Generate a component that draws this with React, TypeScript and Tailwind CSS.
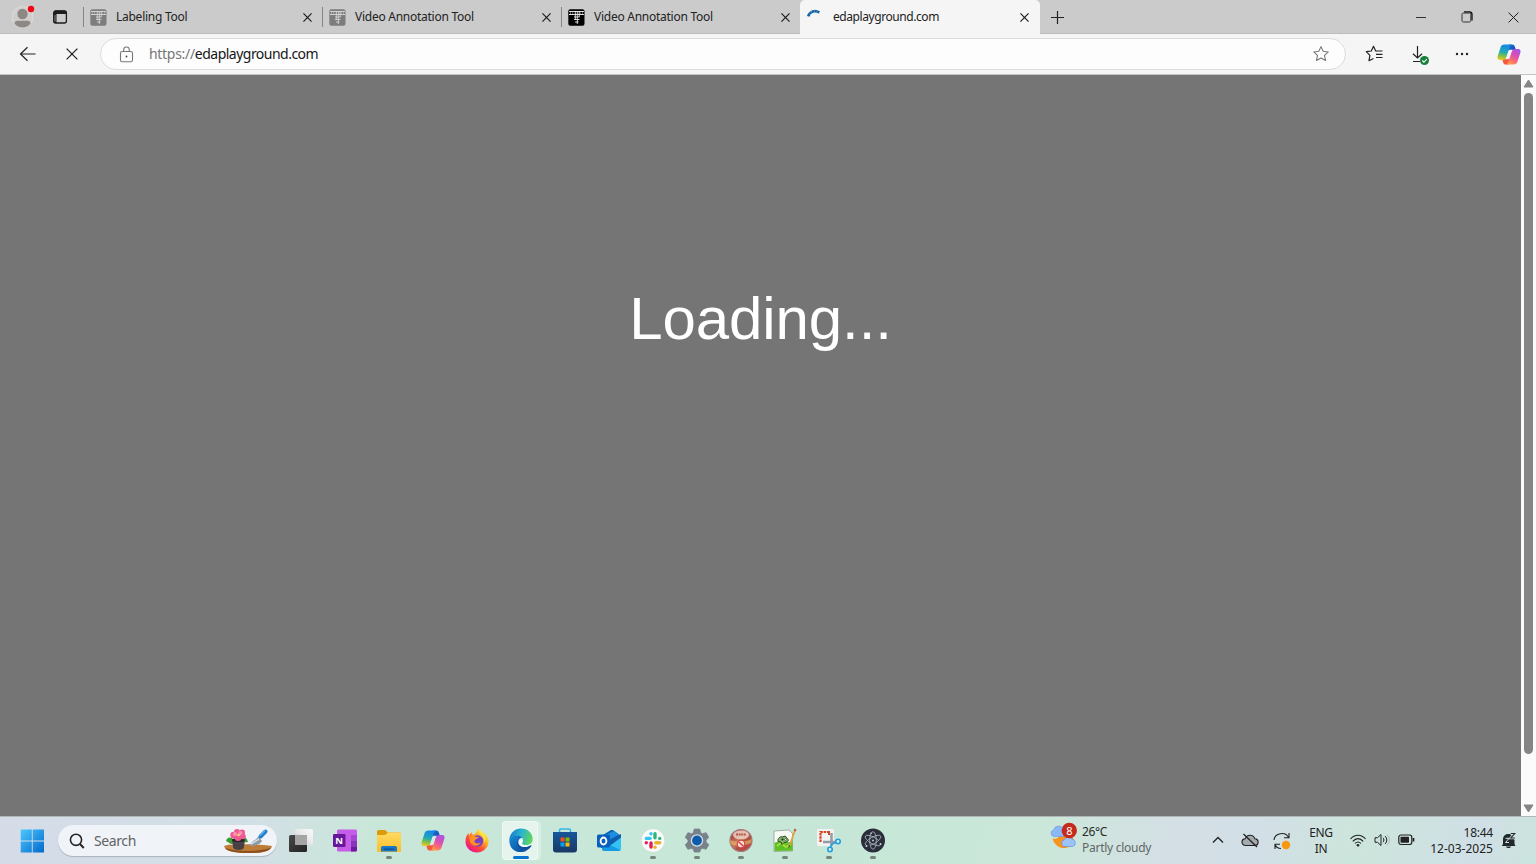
import type { ReactNode } from 'react';

const font = "font-['Noto_Sans','Open_Sans',sans-serif]";

function GridFavicon({ color, mark }: { color: string; mark: string }) {
  return (
    <svg width="17" height="17" viewBox="0 0 17 17">
      <rect x=".3" y=".3" width="16.200" height="16.400" rx="2" fill={color} />
      <g stroke={mark} fill="none">
        <path d="M1 2.500h15M1 5.500h15" strokeWidth="1.100" opacity=".85" />
        <path d="M6 8h5.500M6 10.500h5.500M7 13h3.500" strokeWidth="1" opacity=".8" />
        <path d="M2.500 2v4M4.700 2v4M12.200 2v4M14.500 2v4" strokeWidth=".8" opacity=".5" />
        <path d="M7.300 2v9M9.300 2v13M11.200 2v6" strokeWidth="1" opacity=".8" />
      </g>
    </svg>
  );
}

function CloseIcon({ size = 9, width = 1.3 }: { size?: number; width?: number }) {
  return (
    <svg width={size} height={size} viewBox="0 0 10 10" fill="none" stroke="#1b1b1b" strokeWidth={width} className="overflow-visible">
      <path d="M.5 .5l9 9M9.5 .5l-9 9" />
    </svg>
  );
}

function Tab({ title, icon }: { title: string; icon: ReactNode }) {
  return (
    <div className="flex h-[34px] w-[239px] shrink-0 items-center">
      <div className="h-5 w-px bg-[#858585]" />
      <div className="ml-[6px]">{icon}</div>
      <span className="ml-[9px] text-[12px] leading-4 tracking-[-0.26px] text-[#222]">{title}</span>
      <div className="mr-[10px] ml-auto flex pt-px"><CloseIcon /></div>
    </div>
  );
}

function Copilot({ id, hole }: { id: string; hole: string }) {
  return (
    <svg width="24" height="25" viewBox="0 0 24 24" className="shrink-0">
      <defs>
        <linearGradient id={id + 'a'} x1=".3" y1="0" x2=".1" y2="1">
          <stop offset="0" stopColor="#1689e3" /><stop offset=".45" stopColor="#21a9b8" /><stop offset=".7" stopColor="#7bc04c" /><stop offset="1" stopColor="#ffc91d" />
        </linearGradient>
        <linearGradient id={id + 'b'} x1=".9" y1="0" x2=".4" y2="1">
          <stop offset="0" stopColor="#a455ed" /><stop offset=".45" stopColor="#d94fb4" /><stop offset=".75" stopColor="#fa6a78" /><stop offset="1" stopColor="#ff9a45" />
        </linearGradient>
        <linearGradient id={id + 'c'} x1="0" y1="0" x2="1" y2="1">
          <stop offset="0" stopColor="#1d79df" /><stop offset="1" stopColor="#143ab1" />
        </linearGradient>
      </defs>
      <path d="M12 2h3.200c1.500 0 2.200.800 2.700 2.300l1 3.200H16c-2 0-2.900.6-3.600 2.700L11 6z" fill={`url(#${id}c)`} />
      <path d="M12 22H8.800c-1.500 0-2.200-.8-2.700-2.300l-1-3.200H8c2 0 2.900-.6 3.600-2.700L13 18z" fill="#f4583f" />
      <path d="M7.400 2H15.600c-1.800 0-2.500 1.300-3.100 3L9.500 14.200c-.8 2.400-1.700 3.300-3.700 3.300H3c-2.400 0-3-1.700-2.300-4L3.500 4.900C4.200 2.900 5.300 2 7.400 2z" fill={`url(#${id}a)`} />
      <path d="M16.600 22H8.400c1.800 0 2.500-1.300 3.100-3l3-9.200c.8-2.400 1.700-3.300 3.700-3.300H21c2.400 0 3 1.700 2.300 4l-2.800 8.600c-.7 2-1.800 2.900-3.900 2.900z" fill={`url(#${id}b)`} />
      <path d="M15.800 7.200h-2.400c-.9 0-1.400.4-1.700 1.300l-2 6.300c-.3 1-.7 1.600-1.500 2h2.400c.9 0 1.400-.4 1.700-1.300l2-6.300c.3-1 .7-1.600 1.500-2z" fill={hole} />
    </svg>
  );
}

const starPath = 'M10 1.800l2.400 5.200 5.700.7-4.200 3.900 1.100 5.600-5-2.800-5 2.800 1.100-5.600L1.900 7.700l5.700-.7z';

function TabStrip() {
  return (
    <header className="flex h-[34px] items-center bg-[#cbcbcb] shadow-[inset_0_-1px_0_#bdbdbd]">
      <div className="flex w-[83px] shrink-0 items-center pl-[11px]">
        <svg width="24" height="24" viewBox="0 0 24 24">
          <circle cx="11.500" cy="12" r="10.500" fill="#d1cfcc" stroke="#dedcd8" />
          <circle cx="11.500" cy="9" r="5.200" fill="#8c8884" />
          <path d="M3.500 18.500c0-2.500 2-2.800 4-2.800h8c2 0 4 .3 4 2.800-1.800 2.600-4.800 4-8 4s-6.200-1.400-8-4z" fill="#8c8884" />
          <circle cx="20" cy="4" r="3.200" fill="#ee0713" />
        </svg>
        <svg className="ml-[17px]" width="16" height="16" viewBox="0 0 16 16" fill="none">
          <rect x="1.700" y="2" width="12.700" height="12" rx="2" stroke="#1d1d1d" strokeWidth="1.300" />
          <path d="M1.500 3.500a2 2 0 012-2h9a2 2 0 012 2v1.400h-13zM1.500 4h3v10h-1a2 2 0 01-2-2z" fill="#1d1d1d" />
          <path d="M3 6v6.500" stroke="#aaa" strokeWidth=".8" />
        </svg>
      </div>
      <Tab title="Labeling Tool" icon={<GridFavicon color="#7d7d7d" mark="#dcdcdc" />} />
      <Tab title="Video Annotation Tool" icon={<GridFavicon color="#7d7d7d" mark="#dcdcdc" />} />
      <Tab title="Video Annotation Tool" icon={<GridFavicon color="#000000" mark="#ffffff" />} />
      <div className="flex h-[34px] w-[240px] shrink-0 items-center rounded-t-[5px] bg-[#f5f5f5]">
        <svg className="ml-[6px]" width="16" height="16" viewBox="0 0 16 16" fill="none">
          <path d="M2.300 7.300C3.700 2.500 8.700.8 13.300 3.500" stroke="#1064a9" strokeWidth="2.700" strokeDasharray="2.600 .2" />
        </svg>
        <span className="ml-[11px] text-[12px] leading-4 tracking-[-0.43px] text-[#222]">edaplayground.com</span>
        <div className="mr-[11px] ml-auto flex pt-px"><CloseIcon /></div>
      </div>
      <svg className="ml-[10px]" width="15" height="15" viewBox="0 0 15 15"><path d="M7.500 1v13M1 7.500h13" stroke="#222" strokeWidth="1.200" /></svg>
      <div className="ml-auto flex">
        <div className="flex h-[34px] w-[46px] items-center justify-center"><svg width="10" height="10"><path d="M0 5.500h10" stroke="#333" /></svg></div>
        <div className="flex h-[34px] w-[46px] items-center justify-center">
          <svg width="12" height="12" viewBox="0 0 12 12" fill="none" stroke="#333"><rect x="1" y="2" width="8.800" height="9" rx="1.500" /><path d="M3 .9h5.500a2.500 2.500 0 012.500 2.500v6" stroke="#111" strokeWidth="1.300" /></svg>
        </div>
        <div className="flex h-[34px] w-[46px] items-center justify-center"><CloseIcon size={11} width={0.9} /></div>
      </div>
    </header>
  );
}

function Toolbar() {
  return (
    <div className="flex h-[41px] items-center border-b border-[#c4c4c4] bg-[#f5f5f5]">
      <div className="flex w-14 justify-center">
        <svg width="18" height="16" viewBox="0 0 18 16" fill="none" stroke="#222" strokeWidth="1.200"><path d="M16.500 8h-15M8.500 1.200L1.500 8l7 6.800" /></svg>
      </div>
      <div className="flex w-[32px] justify-center"><CloseIcon size={12} width={1} /></div>
      <div className="ml-[12px] flex h-[32px] w-[1246px] items-center rounded-full border border-[#dcdcdc] bg-[#fdfdfd]">
        <svg className="ml-[18px]" width="15" height="17" viewBox="0 0 15 17" fill="none" stroke="#777" strokeWidth="1.100">
          <rect x="1.500" y="5.500" width="12" height="10.300" rx="1.800" /><path d="M4.700 5.500V3.800a2.800 2.800 0 015.600 0v1.700" /><circle cx="7.500" cy="10.500" r=".9" fill="#444" stroke="none" />
        </svg>
        <span className="ml-[15px] text-[14px] leading-5 text-[#777]"><span className="tracking-[-0.3px]">https://</span><span className="tracking-[-0.52px] text-[#161616]">edaplayground.com</span></span>
        <svg className="mr-[15px] ml-auto" width="18" height="18" viewBox="0 0 20 20" fill="none" stroke="#777" strokeWidth="1.200" strokeLinejoin="round"><path d={starPath} /></svg>
      </div>
      <div className="ml-[7px] flex w-[43px] justify-center">
        <svg width="19" height="18" viewBox="0 0 19 18" fill="none" stroke="#222" strokeWidth="1.200" strokeLinejoin="round"><path d="M11.700 6.200L10.700 6 8.500 1.300 6.300 6l-5 .7 3.600 3.600-.9 5.400 4.500-2.200M10.500 6h7M11 9.300h6.500M11 12.500h6.500" /></svg>
      </div>
      <div className="flex w-[46px] justify-center pt-[2px] pl-[2px]">
        <svg width="18" height="20" viewBox="0 0 18 20" fill="none">
          <path d="M6.500 1v12M2 8.700L6.500 13 11 8.700M2 16.500h7" stroke="#222" strokeWidth="1.200" /><circle cx="13.500" cy="15.500" r="4.500" fill="#15803b" /><path d="M11.300 15.500l1.600 1.600 3-3" stroke="white" strokeWidth="1.100" />
        </svg>
      </div>
      <div className="flex w-[40px] justify-center"><svg width="14" height="4" fill="#222"><circle cx="2" cy="2" r="1.200" /><circle cx="7" cy="2" r="1.200" /><circle cx="12" cy="2" r="1.200" /></svg></div>
      <div className="flex w-[53px] justify-center"><Copilot id="bar" hole="#f7f4f6" /></div>
    </div>
  );
}

function Page() {
  return (
    <main className="flex h-[741px]">
      <div className="flex flex-1 justify-center bg-[#757575] pt-[209px]">
        <h1 className="h-[69px] font-['Liberation_Sans',Arial,sans-serif] text-[60px] leading-[69px] tracking-[-0.1px] text-white">Loading...</h1>
      </div>
      <div className="flex w-[15px] flex-col items-center bg-[#fbfbfb]">
        <svg className="mt-[4px]" width="11" height="9"><path d="M5.500 1L10 8H1z" fill="#858585" stroke="#858585" strokeLinejoin="round" /></svg>
        <div className="mt-[5px] h-[661px] w-[9px] rounded-full bg-[#858585]" />
        <svg className="mt-auto mb-[3px]" width="11" height="9"><path d="M5.500 8L10 1H1z" fill="#858585" stroke="#858585" strokeLinejoin="round" /></svg>
      </div>
    </main>
  );
}

function AppSlot({ children, running = false, active = false }: { children: ReactNode; running?: boolean; active?: boolean }) {
  return (
    <div className="flex h-[47px] w-11 shrink-0 flex-col items-center">
      {active ? (
        <div className="mt-[4px] flex h-[39px] w-[39px] rounded-[4px] bg-white/30">
          <div className="flex h-[39px] w-[36px] flex-col items-center rounded-[4px] border border-white/40 bg-white/35 pt-[6px] pl-[2px]">
            {children}
            <div className="mt-[3px] h-[3px] w-4 shrink-0 rounded-full bg-[#0874d1]" />
          </div>
        </div>
      ) : (
        <div className="flex flex-col items-center pt-[11px]">
          {children}
          {running && <div className="mt-[3px] h-[3px] w-[6px] rounded-full bg-[#74857c]" />}
        </div>
      )}
    </div>
  );
}

const svgProps = { width: 24, height: 25, viewBox: '0 0 24 25', className: 'shrink-0' };

function TaskView() {
  return (
    <svg {...svgProps}>
      <defs>
        <linearGradient id="tvDark" x1="0" y1="0" x2="1" y2="1"><stop stopColor="#494949" /><stop offset="1" stopColor="#222" /></linearGradient>
        <linearGradient id="tvLight" x1="0" y1="1" x2="1" y2="0"><stop stopColor="#bbb" /><stop offset=".5" stopColor="#e8e8e8" /><stop offset="1" stopColor="#fafafa" /></linearGradient>
      </defs>
      <rect x="0" y="7" width="18" height="17" rx="1.500" fill="url(#tvDark)" /><rect x="6" y="1" width="18" height="16" rx="1.500" fill="url(#tvLight)" /><path d="M6 7h12v10H7.500A1.500 1.500 0 016 15.500z" fill="#a5a5a5" />
    </svg>
  );
}

function OneNote() {
  return (
    <svg {...svgProps}>
      <rect x="4" y="1.500" width="20" height="22" rx="1.500" fill="#c65de8" /><path d="M18 7h6v6h-6z" fill="#a645d4" /><path d="M18 13h6v5.500h-6z" fill="#8a35bd" /><path d="M18 18.500h6V22a1.500 1.500 0 01-1.500 1.500H18z" fill="#6c1b9b" /><rect x="0" y="6" width="12.500" height="13" rx="1.300" fill="#69179a" />
      <text x="6.200" y="15.900" textAnchor="middle" fontSize="9.500" fontWeight="700" fill="white">N</text>
    </svg>
  );
}

function Explorer() {
  return (
    <svg {...svgProps}>
      <defs><linearGradient id="folder" x1="0" y1="0" x2="0" y2="1"><stop stopColor="#ffdb63" /><stop offset="1" stopColor="#f9bd28" /></linearGradient></defs>
      <path d="M0 3.500A1.500 1.500 0 011.500 2h6.800l2.200 2.500H23A1.500 1.500 0 0124 6v4H0z" fill="#dc9b0b" /><path d="M0 7h8l3-2.500h11.500A1.500 1.500 0 0124 6v16.500a1.300 1.300 0 01-1.300 1.500H1.300A1.300 1.300 0 010 22.500z" fill="url(#folder)" />
      <path d="M4 23.500v-4A1.700 1.700 0 015.700 18h12.600a1.700 1.700 0 011.700 1.500v4z" fill="#1678c6" /><path d="M7 20.500h10v1.500H7z" fill="#0c549b" />
    </svg>
  );
}

function Firefox() {
  return (
    <svg {...svgProps}>
      <defs><linearGradient id="fox" x1=".85" y1=".1" x2=".2" y2=".9"><stop stopColor="#fff44f" /><stop offset=".35" stopColor="#ffad25" /><stop offset=".65" stopColor="#ff4b35" /><stop offset="1" stopColor="#e9168b" /></linearGradient></defs>
      <path d="M14 1c2 2 3 3.200 3.500 5 .8-.4.800-1 .8-1.500C22 7 24 10.500 23.500 14.500 23 20 18 24.500 12 24.500S.500 20 .500 13.500C.500 10 1.500 7 3.500 5L4 7.500 6.500 4 8 7c2-.200 3-3 6-6z" fill="url(#fox)" />
      <circle cx="12.500" cy="13" r="5.800" fill="#7741c7" /><path d="M4 8c2-1 5-.8 6.500.8l3.500.300c-.300 1.300-2 1.500-2.800 1.800-.900.400-.8 1.400-2 2 .5 2.500 4 3.500 6.500 1.300-1 4.500-9.500 5-10.700-1z" fill="#ff9226" /><path d="M14 5.500c4 1 6 5 4.500 9 4-4 1-10-4-12z" fill="#ffe448" />
    </svg>
  );
}

function Edge() {
  return (
    <svg {...svgProps}>
      <defs>
        <linearGradient id="edgeTop" x1="0" y1=".3" x2="1" y2=".5"><stop stopColor="#147dca" /><stop offset=".5" stopColor="#2bb4cb" /><stop offset="1" stopColor="#63d857" /></linearGradient>
        <linearGradient id="edgeLow" x1="0" y1="0" x2="1" y2="1"><stop stopColor="#168bd4" /><stop offset="1" stopColor="#0b479b" /></linearGradient>
      </defs>
      <path d="M.3 12C.8 5 5.800.5 12 .5c7 0 11.700 5 11.700 10.500 0 4-3 6.200-6.500 6.200-3 0-4.200-1-4.200-2 0-.800 1-1.300 1-3 0-2.500-2.500-4.500-6-4.500C4 7.700 1.300 9.500.3 12z" fill="url(#edgeTop)" />
      <path d="M.3 12C1 9.500 4 7.500 8 7.500c3.500 0 6 2 6 4.500-4 .3-5 .8-5 3.200 0 5 5.500 7.300 9 7.200C12 26 .300 24.500.3 12z" fill="url(#edgeLow)" />
      <path d="M9 12.500c-2.500 5 1 10 8.500 9.900 2-.800 4-2.600 5-4.600.300-.500-.200-.800-.8-.500-5.700 2.700-10.700.8-10.700-3z" fill="#124f9c" />
      <path d="M13.200 9.700c-2.500.3-4 2.200-3.900 4.700.2 3.500 4.300 5.300 8.700 4.300 2.500-.5 4.500-1.900 5.500-3.900-1.500 1.500-3.800 2.400-6.300 2.400-3 0-4.200-1-4.200-2 0-.800 1-1.300 1-3 0-.9-.3-1.800-.8-2.500z" fill="#effbfa" />
    </svg>
  );
}

function Store() {
  return (
    <svg {...svgProps}>
      <defs><linearGradient id="store" x1="0" y1="0" x2="0" y2="1"><stop stopColor="#17569b" /><stop offset="1" stopColor="#193966" /></linearGradient></defs>
      <path d="M6.500 5V2.500A1.500 1.500 0 018 1h8a1.500 1.500 0 011.500 1.500V5" fill="none" stroke="#35b6eb" strokeWidth="1.600" /><path d="M0 4h24v17.500a3 3 0 01-3 3H3a3 3 0 01-3-3z" fill="url(#store)" />
      <path d="M7.500 9.500h4v4h-4z" fill="#f25022" /><path d="M12.500 9.500h4v4h-4z" fill="#7fba00" /><path d="M7.500 14.500h4v4h-4z" fill="#00a4ef" /><path d="M12.500 14.500h4v4h-4z" fill="#ffb900" />
    </svg>
  );
}

function Outlook() {
  return (
    <svg {...svgProps}>
      <path d="M3.500 8.500L14 2l2 0 8 6v4L9 20H4z" fill="#0864b4" /><path d="M7 7.500l10-4.500 5 3.500-11 7z" fill="#1d8ee0" /><path d="M12 12l12-6v5l-12 6z" fill="#105cad" /><path d="M24 9.500V21a2 2 0 01-2 2H6z" fill="#35c3f4" /><path d="M5 13l18.500 9-1.500 1H7a2 2 0 01-2-2z" fill="#159ce6" /><rect x="0" y="6.500" width="13" height="13" rx="1.500" fill="#0860be" /><ellipse cx="6.500" cy="13" rx="2.900" ry="3.500" fill="none" stroke="white" strokeWidth="1.800" />
    </svg>
  );
}

function Slack() {
  return (
    <svg {...svgProps}>
      <circle cx="12" cy="12.500" r="11.800" fill="#fbfbfb" stroke="#c8d5ce" strokeWidth=".5" />
      <g strokeWidth="3.400" strokeLinecap="round"><path d="M5.300 10.400H9" stroke="#36c5f0" /><path d="M10 5.700h0" stroke="#36c5f0" /><path d="M14 5.800v4" stroke="#2eb67d" /><path d="M18.700 10.400h0" stroke="#2eb67d" /><path d="M14.800 14.700h3.900" stroke="#ecb22e" /><path d="M14 19.200h0" stroke="#ecb22e" /><path d="M10 15v4" stroke="#e01e5a" /><path d="M5.300 14.700h0" stroke="#e01e5a" /></g>
    </svg>
  );
}

function Settings() {
  return (
    <svg {...svgProps}>
      <path d="M9.300 1h5.400l1 3.700 1.700 1 3.700-1 2.700 4.700-2.700 2.700v1.900l2.700 2.700-2.700 4.600-3.700-1-1.700 1-1 2.800H9.300l-1-2.800-1.700-1-3.700 1-2.700-4.600L3 14v-1.900L.200 9.400l2.700-4.700 3.700 1 1.700-1z" fill="#79828b" stroke="#79828b" strokeLinejoin="round" strokeWidth=".8" /><circle cx="12" cy="12.500" r="6.200" fill="#d5dee5" /><circle cx="12" cy="12.500" r="4.900" fill="#0c5cac" />
    </svg>
  );
}

function RedOrb() {
  return (
    <svg {...svgProps}>
      <defs><linearGradient id="orb" x1="0" y1="0" x2="1" y2="1"><stop stopColor="#8c1e26" /><stop offset=".45" stopColor="#ce7c65" /><stop offset=".6" stopColor="#a9543d" /><stop offset="1" stopColor="#cf3154" /></linearGradient></defs>
      <circle cx="12" cy="12.500" r="11" fill="url(#orb)" stroke="#a8797c" strokeWidth="1.200" /><ellipse cx="12" cy="7" rx="8" ry="4.500" fill="#f3ddd2" opacity=".75" /><path d="M1.500 12c5 2.500 15 2.500 21-1l-.5 4c-5 3-15 3.500-20.500 1z" fill="#e5b261" opacity=".7" />
      <path d="M7 6.500h10" stroke="#b05a4c" strokeWidth="2" strokeDasharray="2 .6" /><circle cx="12" cy="16" r="3.800" fill="#f8ddd8" stroke="#d34540" strokeWidth="1.200" /><path d="M9.300 13.500l5.400 5" stroke="#d34540" strokeWidth="1.500" />
    </svg>
  );
}

function Notepad() {
  return (
    <svg {...svgProps}>
      <path d="M1 3l15-1 3.500 3.500V23L1 23.500z" fill="#f8faf5" stroke="#8a918a" strokeWidth=".7" /><path d="M1.500 15c5-3 12 1 18-2v9.800L1.500 23z" fill="#5fc026" /><path d="M4 18l4-3 5 4 5-3" fill="none" stroke="#a3dd38" strokeWidth="2" />
      <path d="M5 13.500c-.5-3 2-5.500 5-4.500 1-1.500 3.500-1 3.500 1 2 .5 2.500 3 .5 4l-3 .5-2 2-1-2.500z" fill="#83b965" stroke="#2e4c25" strokeWidth="1" /><circle cx="9.500" cy="11.500" r="1.100" fill="#222" /><circle cx="12.500" cy="11.500" r=".9" fill="white" stroke="#222" strokeWidth=".5" />
      <path d="M22 2L16.500 18" stroke="#e4a33d" strokeWidth="1.800" /><path d="M22.500 1l-.8 2.200" stroke="#b66142" strokeWidth="2.200" /><path d="M16.600 17l-.8 2.500" stroke="#45433e" strokeWidth="1" />
    </svg>
  );
}

function SnippingTool() {
  return (
    <svg {...svgProps}>
      <rect x="0" y="1" width="17" height="17" rx="1.500" fill="#f2f2f2" /><path d="M12.500 4h-9v10.500" fill="none" stroke="#d64420" strokeWidth="2.200" strokeDasharray="2.500 .8" /><path d="M12 3v4" stroke="#d64420" strokeWidth="2" /><path d="M14.500 5v13M6 14h12" stroke="#929ca4" strokeWidth="2.500" /><g fill="#d8f0f8" stroke="#219ddc" strokeWidth="1.600"><circle cx="21" cy="13.500" r="2.200" /><circle cx="13" cy="21.500" r="2.200" /></g><path d="M14.500 16.500l4.500-2.200M14.500 16.500l-1 3" stroke="#219ddc" strokeWidth="1.400" />
    </svg>
  );
}

function ElectronApp() {
  return (
    <svg {...svgProps} fill="none">
      <circle cx="12" cy="12.500" r="12" fill="#2b2e3a" /><g stroke="#a9bcc2" strokeWidth=".8"><ellipse cx="12" cy="12.500" rx="8.800" ry="3.300" transform="rotate(30 12 12.500)" strokeDasharray="34 6" /><ellipse cx="12" cy="12.500" rx="8.800" ry="3.300" transform="rotate(90 12 12.500)" /><ellipse cx="12" cy="12.500" rx="8.800" ry="3.300" transform="rotate(150 12 12.500)" strokeDasharray="34 6" /></g><g fill="#c8dadd"><circle cx="12" cy="12.500" r=".9" /><circle cx="5.500" cy="18" r="1" /><circle cx="19.500" cy="16" r="1" /><circle cx="10" cy="5.300" r=".8" /></g>
    </svg>
  );
}

function SearchBox() {
  return (
    <div className="flex h-[31px] w-[219px] shrink-0 items-center rounded-full bg-[#f0f4f8] shadow-[0_1px_1px_#a8b3bd]">
      <svg className="ml-[11px]" width="16" height="16" viewBox="0 0 16 16" fill="none" stroke="#262626" strokeWidth="1.600"><circle cx="7" cy="6.800" r="5.600" /><path d="M11 11l3.800 4" strokeWidth="2" /></svg>
      <span className="ml-[9px] text-[14px] leading-5 tracking-[-0.4px] text-[#606365]">Search</span>
      <svg className="mr-[5px] ml-auto" width="48" height="26" viewBox="0 0 48 26">
        <path d="M0 18c3-1.500 9-1.500 15-1.500 10-.5 25 0 33 1.500-1 5-8 7-23 7C10 25.500 1 23 0 18z" fill="#bd7c37" /><path d="M1 20c12 4 35 4 46-.5-2 4-9 5.500-22 5.500S3 23.500 1 20z" fill="#8d511f" />
        <path d="M2 13c1-4 5-5 8-1l2 3-5 1zM24 14c-1-5-5-6-7-3l-1 4z" fill="#3a9b2f" /><path d="M8 11.500h13l-1.200 8.500c-1 2.500-9.300 2.500-10.600 0z" fill="#474145" /><ellipse cx="14.500" cy="12" rx="6.500" ry="2" fill="#272326" />
        <g fill="#ed5a92"><circle cx="9.500" cy="7" r="3.200" /><circle cx="13" cy="4" r="3" /><circle cx="18" cy="4.500" r="3" /><circle cx="19" cy="8.500" r="2.800" /><circle cx="14" cy="9.500" r="3.500" /></g><g fill="#ff91b7"><circle cx="11" cy="6" r="2" /><circle cx="16.500" cy="5" r="2" /></g><circle cx="14.500" cy="7" r="1.300" fill="#ffd766" />
        <path d="M31 12l3.500-3.500L38 13c-2 4-7 5-13 5 2-2 3-5 6-6z" fill="#8c9aa5" /><path d="M27 16l8-5" stroke="#d6dde2" strokeWidth="1.500" /><path d="M36.500 8.500l5-5" stroke="#237fc9" strokeWidth="4" strokeLinecap="round" /><path d="M36 7.500l5-5" stroke="#5bb4ee" strokeWidth="1.200" />
      </svg>
    </div>
  );
}

function Tray() {
  return (
    <>
      <div className="ml-[155px] flex h-[47px] w-[150px] shrink-0">
        <svg className="mt-[4px] shrink-0" width="28" height="30" viewBox="0 0 28 30">
          <path d="M2.500 17.500c4 1 7-1 8-5 5 0 10 1 13 5l-4 8c-7 4-15 0-17-8z" fill="#f69520" /><path d="M4 15.500a3.300 3.300 0 01-.3-6.500 5.200 5.200 0 019.500-1.500l1 8z" fill="#8bb8f4" stroke="#6795dc" strokeWidth=".6" /><path d="M14 25.500a3.400 3.400 0 010-6.500 4.800 4.800 0 018-.8 3.700 3.700 0 01.5 7.300z" fill="#9cc4fb" stroke="#6795dc" strokeWidth=".7" />
          <circle cx="19.300" cy="9.500" r="7.700" fill="#c42b1c" /><text x="19.300" y="13.500" textAnchor="middle" fontSize="11" fill="white">8</text>
        </svg>
        <div className="mt-[7px] ml-[4px] flex flex-col text-[12px] leading-4"><span className="tracking-[-0.400px] text-[#272b2a]">26°C</span><span className="tracking-[-0.27px] text-[#5f6866]">Partly cloudy</span></div>
      </div>
      <div className="flex w-9 shrink-0 justify-center pb-[2px]"><svg width="12" height="8" fill="none" stroke="#222" strokeWidth="1.300"><path d="M1 6.500l5-5 5 5" /></svg></div>
      <div className="flex w-7 shrink-0 justify-center">
        <svg width="18" height="15" viewBox="0 0 18 15" fill="none" stroke="#222" strokeWidth="1.100"><path d="M4.500 12.500a3.400 3.400 0 01-.2-6.800 5 5 0 019.500 0 3.400 3.400 0 01-.2 6.800z" fill="#a5abad" /><path d="M2.500 1l13.500 13" strokeWidth="1.300" /></svg>
      </div>
      <div className="flex w-9 shrink-0 justify-center">
        <svg width="18" height="18" viewBox="0 0 18 18" fill="none" stroke="#222" strokeWidth="1.100"><path d="M1 8C1.500 1 12.500-1 15.500 5.500M16 1v4.800h-5M8 16.500c-3 0-5-1.500-6-4M2 17v-4.800h5" /><circle cx="13" cy="13" r="4.200" fill="#f99610" stroke="none" /></svg>
      </div>
      <div className="flex w-[42px] shrink-0 flex-col items-center text-[12px] leading-4 tracking-[-0.300px] text-[#222]"><span>ENG</span><span>IN</span></div>
      <div className="flex w-8 shrink-0 justify-center pb-px">
        <svg width="16" height="13" viewBox="0 0 16 13" fill="none" stroke="#222" strokeWidth="1.100"><path d="M.500 5c4-5 11-5 15 0M2.800 7.300c3-3.600 7.400-3.600 10.400 0M5 9.500c1.800-2.100 4.200-2.100 6 0" /><circle cx="8" cy="11.300" r="1.300" fill="#222" stroke="none" /></svg>
      </div>
      <div className="flex w-4 shrink-0 justify-center pb-[2px]">
        <svg width="16" height="14" viewBox="0 0 16 14" fill="none" stroke="#222" strokeWidth="1"><path d="M1 4.700h2.500L7 1.500v11L3.500 9.300H1z" strokeLinejoin="round" /><path d="M9 4.800c1.200 1.200 1.200 3.200 0 4.400M11 3c2.300 2.300 2.300 5.700 0 8" /><path d="M13 1.500c3.200 3.200 3.200 7.800 0 11" stroke="#aebbb8" /></svg>
      </div>
      <div className="flex w-8 shrink-0 justify-center pb-[2px]"><svg width="17" height="12" viewBox="0 0 17 12" fill="none" stroke="#222" strokeWidth="1.200"><rect x=".8" y="1" width="13" height="9.500" rx="2.200" /><rect x="2.500" y="2.700" width="8.500" height="6" rx=".8" fill="#222" stroke="none" /><path d="M15.500 4v3.500" strokeWidth="1.700" /></svg></div>
      <div className="flex w-[71px] shrink-0 flex-col items-end text-[12px] leading-4 text-[#222]"><span className="tracking-[-0.25px]">18:44</span><span className="tracking-[0.02px]">12-03-2025</span></div>
      <div className="flex w-[30px] shrink-0 justify-center">
        <svg width="15" height="17" viewBox="0 0 15 17"><path d="M2 7a5 5 0 015-5h2.500l4 6v4l1 2H.800L2 12zM5 14.500h5c-.5 2-4.500 2-5 0z" fill="#202829" /><path d="M4.500 6.300H8l-3.500 4.200H8" fill="none" stroke="#cfe0e0" strokeWidth="1" /><path d="M9.500 1.500H13.800L9.800 6H14" fill="none" stroke="#cfe0e0" strokeWidth="2.600" /><path d="M9.800 1.500h4L9.800 6h4" fill="none" stroke="#202829" strokeWidth="1.100" /></svg>
      </div>
    </>
  );
}

function Taskbar() {
  return (
    <footer className="flex h-[48px] items-center border-t border-[#b1b7b7] bg-[linear-gradient(100deg,#d5dce8_0%,#d2dfe5_17%,#c9e7d9_24%,#c6e7d7_55%,#cbe7d9_68%,#d4dfe5_76%,#d2dfe6_82%,#cce5db_88%,#d0dfe6_96%,#cbe4dd_100%)]">
      <div className="flex w-[58px] shrink-0 pl-[20px]">
        <svg width="24" height="24" viewBox="0 0 24 24"><defs><linearGradient id="win" gradientUnits="userSpaceOnUse" x1="0" y1="0" x2="24" y2="24"><stop stopColor="#4ecaff" /><stop offset="1" stopColor="#0068cb" /></linearGradient></defs><path d="M.700.500h11.100v11H.700zM12.700.500H24v11H12.700zM.700 12.500h11.100v11H.700zM12.700 12.500H24v11H12.700z" fill="url(#win)" /></svg>
      </div>
      <SearchBox />
      <div className="ml-[2px] flex shrink-0">
        <AppSlot><TaskView /></AppSlot>
        <AppSlot><OneNote /></AppSlot>
        <AppSlot running><Explorer /></AppSlot>
        <AppSlot><Copilot id="task" hole="#d5ebe4" /></AppSlot>
        <AppSlot><Firefox /></AppSlot>
        <AppSlot active><Edge /></AppSlot>
        <AppSlot><Store /></AppSlot>
        <AppSlot><Outlook /></AppSlot>
        <AppSlot running><Slack /></AppSlot>
        <AppSlot running><Settings /></AppSlot>
        <AppSlot running><RedOrb /></AppSlot>
        <AppSlot running><Notepad /></AppSlot>
        <AppSlot running><SnippingTool /></AppSlot>
        <AppSlot running><ElectronApp /></AppSlot>
      </div>
      <Tray />
    </footer>
  );
}

export default function App() {
  return (
    <div className={`flex h-[864px] w-[1536px] flex-col overflow-hidden whitespace-nowrap ${font}`}>
      <TabStrip />
      <Toolbar />
      <Page />
      <Taskbar />
    </div>
  );
}
